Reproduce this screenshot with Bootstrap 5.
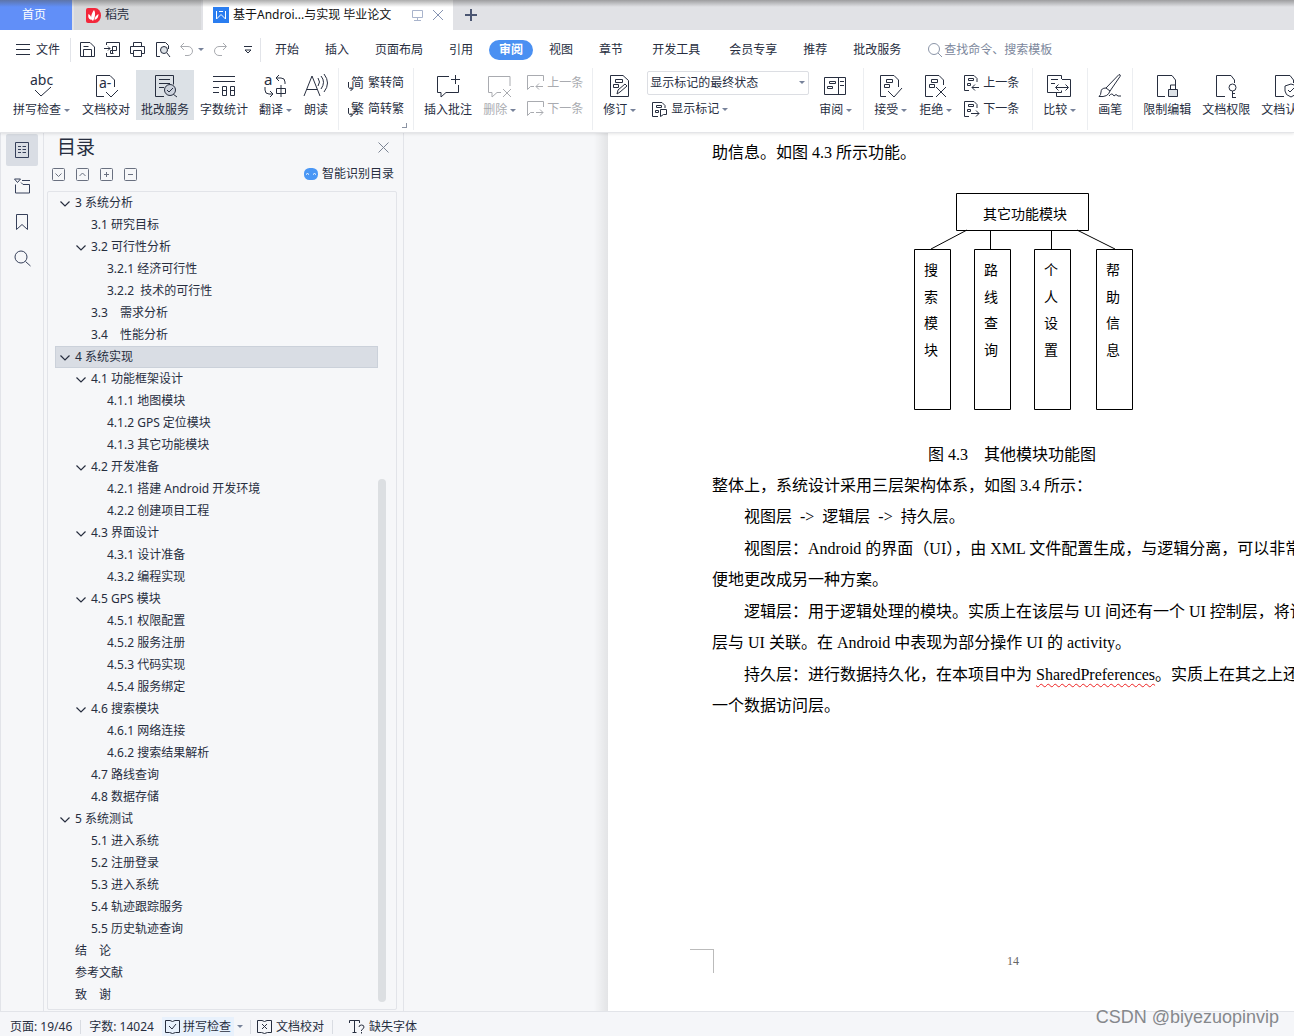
<!DOCTYPE html>
<html lang="zh-CN">
<head>
<meta charset="utf-8">
<meta name="viewport" content="width=device-width, initial-scale=1">
<title>毕业论文</title>
<link href="https://cdn.jsdelivr.net/npm/bootstrap@5.3.0/dist/css/bootstrap.min.css" rel="stylesheet">
<style>
:root{--ink:#272e3f;--line:#e2e4e9;--panel:#f6f7f9;--mute:#a9abb0}
body{font:12px/18px "Noto Sans","Noto Sans CJK SC",sans-serif;color:var(--ink);background:var(--panel)}
button{background:none;border:0;padding:0;color:inherit;white-space:nowrap}
a{color:inherit;text-decoration:none}
svg{display:block;flex:none;fill:none;stroke-width:1;overflow:visible}
svg:not([stroke]){stroke:currentColor}
svg text{fill:currentColor;stroke:none}
.tabbar{height:30px;background:#e1e2e6;position:relative}
.tabbar::after{content:"";position:absolute;left:0;right:0;top:0;height:7px;background:linear-gradient(rgba(90,90,90,.5),rgba(90,90,90,0));pointer-events:none}
.tab-home{width:72px;background:#618ff8;color:#fff;padding-right:4px}
.tab-side{width:127px;background:#d7d8da;margin:0 2px;padding-left:12px}
.tab-doc{width:250px;background:#fff;color:#111;padding-left:10px;gap:4px}
.tab-plus{stroke-width:2}
.menubar{height:38px;padding-top:1px;background:#fff}
.menubar .rule{width:1px;height:24px;background:var(--line)}
.file-btn{gap:6px;margin-right:10px}
.menu-item{padding:0 10px;margin:0 3px;height:20px;line-height:20px}
.menu-item.on{background:#4a90f2;color:#fff;font-weight:700;border-radius:10px}
.menu-item.far{margin-left:6px}
.find-box{margin-left:14px;gap:2px}
.find{color:#7c879c;border:0;outline:0;width:140px;background:none;padding:0}
.find::placeholder{color:#7c879c;opacity:1}
.ribbon{height:65px;background:#fff;border-bottom:1px solid #e4e5e8;overflow:hidden;padding-left:3px}
.ribbon-wrap{box-shadow:0 1px 3px rgba(0,0,0,.1);position:relative;z-index:2}
.grp{display:flex;flex:none;gap:1px;padding:2px 5px 0;border-right:1px solid #eceef1;height:62px;position:relative}
.big{display:flex;flex-direction:column;align-items:center;height:50px;padding:2px 5px 0}
.big svg{width:26px;height:26px;margin:0 -1px 3px}
.big.drop svg{margin-left:-3px}
.big.on{background:#dce1e6}
.caret{display:inline-block;border:3px solid transparent;border-top-color:#77829a;border-bottom:0;margin:0 1px 0 3px;vertical-align:middle}
.pair{display:flex;flex-direction:column;gap:8px;padding:4px 4px 0}
.pair button{display:flex;align-items:center;gap:3px;height:18px}
.pair svg{width:17px;height:18px}
.off{color:var(--mute)}
.view-select{width:162px;height:24px;margin-top:-4px;border:1px solid #dcdee3;border-radius:2px;background:#fff;color:var(--ink);padding:0 0 0 2px;appearance:none;outline:0}
.view-wrap{position:relative;height:18px}
.view-wrap .caret{position:absolute;right:3px;top:7px}
.corner{position:absolute;right:6px;bottom:2px;width:5px;height:5px;border:solid #8b93a3;border-width:0 1px 1px 0}
.rail{width:44px;border:solid var(--line);border-width:0 1px;padding:1px 5px 0;gap:4px;color:#36405a}
.rail button{width:32px;height:32px;border-radius:2px;display:flex;align-items:center;justify-content:center}
.rail button.on{background:#d9dde4}
.toc{width:360px;border-right:1px solid var(--line);padding:1px 6px 1px 3px}
.toc-head{padding:0 8px 0 10px}
.toc-title{font-size:19px;line-height:26px;font-weight:400;margin:0}
.toc-tools{gap:11px;margin:5px 3px 8px 5px;color:#697080}
.toc-smart{color:var(--ink)}
.toc-box{border:1px solid var(--line);border-radius:2px;overflow:hidden;min-height:0}
.toc-list{list-style:none;margin:0;padding:0 0 0 7px;font-size:12px}
.toc-list a{display:flex;align-items:center;height:22px;white-space:pre}
.toc-list a.on{background:#d9dde4;outline:1px solid #cbd1da;outline-offset:-1px}
.toc-list svg{width:10px;height:6px;margin:2px 5px 0;stroke-width:1.2}
.toc-list .leaf{padding-left:20px}
.l2{padding-left:16px}.l3{padding-left:32px}
.thumb{width:8px;height:64%;border-radius:4px;background:#dcdfe2;margin-bottom:7px}
.thumb-col{width:18px}
.gutter{width:204px;background:linear-gradient(90deg,rgba(0,0,0,0) 93%,rgba(0,0,0,.08))}
.paper{background:#fff;color:#000;padding:4px 0 38px 104px;font:400 16px/31px "Liberation Serif","Noto Sans CJK SC",serif;min-width:0;overflow:hidden}
.sheet{width:600px;white-space:nowrap;flex:none}
.sheet p{margin:0}
.sheet .ind{text-indent:32px}
.sheet .ind + .ind{margin-top:1px}
.chart{margin:25px 0 28px 202px}
.chart text{font-size:14px;fill:#000}
.misspell{text-decoration:underline wavy #e22;text-decoration-thickness:1px;text-underline-offset:3px;text-decoration-skip-ink:none}
.crop{width:24px;height:24px;border:solid #bbb;border-width:1px 1px 0 0;margin-left:-22px}
.folio{font-size:12px;line-height:24px;color:#666}
.statusbar{height:25px;background:#f5f6f9;border-top:1px solid var(--line);padding:5px 0 0 10px;position:relative}
.statusbar .cell{display:flex;align-items:center;height:20px}
.statusbar .rule{width:1px;height:14px;background:#d9dce2}
.statusbar .rule.slim{margin:0 6px}
.spell{background:#e8f1fc;padding:0 3px;gap:3px}
.mark-by{position:absolute;right:15px;bottom:7px;font:18px/24px "Liberation Sans",sans-serif;color:#86888c;z-index:3}
</style>
<script src="https://cdn.jsdelivr.net/npm/bootstrap@5.3.0/dist/js/bootstrap.bundle.min.js"></script>
</head>
<body class="d-flex flex-column vh-100 overflow-hidden">
<header class="flex-shrink-0 ribbon-wrap">
<div class="tabbar d-flex">
  <button class="tab-home">首页</button>
  <button class="tab-side d-flex align-items-center gap-1"><svg width="15" height="15" viewBox="0 0 15 15" stroke="none"><path d="M2 0h7a6 7.500 0 0 1 0 15H2a2 2 0 0 1-2-2V2a2 2 0 0 1 2-2z" fill="#f3273b"/><path d="M7 13C4 11 5 6 8 2c2 3 1 8-1 11zM5.500 12C2 11 2 8 2.500 6c2 1 3 3 3 6zM8.500 12c0-3 2-5 4-6 0 3-1 5-4 6z" fill="#fff"/></svg>稻壳</button>
  <div class="tab-doc d-flex align-items-center"><svg width="16" height="16" viewBox="0 0 16 16"><path fill="#2a7df0" stroke="none" d="M0 0h16v16H0z"/><path stroke="#fff" d="M3.500 4v8l4.500-4.500 4.500 4.500V4M6 4.500h4"/></svg>基于Androi...与实现 毕业论文
    <svg class="ms-3 me-1" width="13" height="12" viewBox="0 0 13 12" stroke="#a9b4cc"><path d="M1.500 1.500h10v7h-10zM6.500 9v2M3 11.500h7"/></svg><button aria-label="关闭"><svg width="12" height="12" viewBox="0 0 12 12" stroke="#8593b2"><path d="M1 1l10 10M11 1L1 11"/></svg></button></div>
  <button class="ms-1 px-2" aria-label="新建"><svg class="tab-plus" width="12" height="12" viewBox="0 0 12 12" stroke="#4b5672"><path d="M6 0v12M0 6h12"/></svg></button>
</div>
<nav class="menubar d-flex align-items-center text-nowrap">
  <button class="file-btn d-flex align-items-center ms-3"><svg width="14" height="11" viewBox="0 0 14 11"><path d="M0 .5h14M0 5.500h14M0 10.500h14"/></svg>文件</button>
  <span class="rule me-2"></span>
  <button aria-label="保存" class="me-2"><svg width="17" height="17" viewBox="0 0 17 17"><path d="M1.500 1.500h9.500l4.500 4.500v9.500h-14zM4.500 15V8.500h8V15M4.500 5.500h5"/></svg></button>
  <button aria-label="输出PDF" class="me-2"><svg width="17" height="17" viewBox="0 0 17 17"><path d="M2.500 4V1.500h13v14h-13V12M0 7.500h6M4 5.500l2 2-2 2M8.500 12V5.500h4v4h-6v3h3"/></svg></button>
  <button aria-label="打印" class="me-2"><svg width="17" height="17" viewBox="0 0 17 17"><path d="M4.500 5V1.500h8V5M4 12.500H1.500v-7h14v7H13M4.500 9.500h8v6h-8z"/></svg></button>
  <button aria-label="预览" class="me-2"><svg width="17" height="17" viewBox="0 0 17 17"><path d="M6 15.500H2.500v-14h9l3 3V8M13 12l3 4"/><circle cx="10" cy="9" r="3.500" fill="#dce1e6"/></svg></button>
  <button aria-label="撤销" class="off d-flex align-items-center"><svg width="15" height="15" viewBox="0 0 15 15"><path d="M5 1L1.500 4.500 5 8M2 4.500h7a4.500 4.500 0 0 1 0 9H6"/></svg><span class="caret ms-1"></span></button>
  <button aria-label="恢复" class="off ms-2 me-3"><svg width="15" height="15" viewBox="0 0 15 15"><path d="M10 1l3.500 3.500L10 8M13 4.500H6a4.500 4.500 0 0 0 0 9h3"/></svg></button>
  <button aria-label="更多"><svg width="8" height="8" viewBox="0 0 8 8"><path d="M0 .5h8M1 4l3 3 3-3z"/></svg></button>
  <span class="rule ms-2"></span>
  <button class="menu-item ms-1">开始</button><button class="menu-item">插入</button><button class="menu-item">页面布局</button><button class="menu-item">引用</button><button class="menu-item on">审阅</button><button class="menu-item">视图</button><button class="menu-item">章节</button><button class="menu-item far">开发工具</button><button class="menu-item far">会员专享</button><button class="menu-item">推荐</button><button class="menu-item">批改服务</button>
  <label class="find-box d-flex align-items-center"><svg width="14" height="14" viewBox="0 0 14 14" stroke="#8b95a8"><circle cx="6" cy="6" r="5.500"/><path d="M10 10l4 4"/></svg><input class="find" placeholder="查找命令、搜索模板" aria-label="查找命令"></label>
</nav>
<div class="ribbon d-flex">
  <div class="grp">
    <button class="big drop"><svg viewBox="0 0 26 26"><text x="2" y="13" font-size="14">abc</text><path d="M7 18l6 6 10-9"/></svg><span>拼写检查<i class="caret"></i></span></button>
    <button class="big"><svg viewBox="0 0 26 26"><path d="M11 24.500H3.500v-21H17l4.500 4.500v7M13 20l5 5 7-7"/><text x="6" y="16" font-size="14">a-</text></svg><span>文档校对</span></button>
    <button class="big on"><svg viewBox="0 0 26 26"><path d="M12 24.500H3.500v-21h18v9M7 7.500h11M7 11.500h11M7 15.500h5M21 22l4 3"/><circle cx="18" cy="18" r="5.500" fill="#ccd2dc"/><path d="M15 18l2 2 4-4"/></svg><span>批改服务</span></button>
    <button class="big"><svg viewBox="0 0 26 26"><path d="M2 4.500h22M2 9.500h22M2 15.500h6M2 20.500h6M11.500 14.500h4v9h-4zM19.500 14.500h4v9h-4zM11.500 18.500h4M19.500 18.500h4"/></svg><span>字数统计</span></button>
    <button class="big drop"><svg viewBox="0 0 26 26"><text x="2" y="13" font-size="15">a</text><path d="M17 3l-3 3 3 3M14 6h5q4 0 4 4v2M3 15v3q0 4 4 4h4M8 19l3 3-3 3M14.500 16.500h9v5h-9zM19 13v12"/></svg><span>翻译<i class="caret"></i></span></button>
    <button class="big"><svg viewBox="0 0 26 26"><path d="M1 24L9 4l8 20M4 17.500h10M15 6q3 4 0 8M18 4q5 6 0 13M21 2q7 9 0 18"/></svg><span>朗读</span></button>
  </div>
  <div class="grp">
    <div class="pair"><button><svg viewBox="0 0 17 18"><text x="3" y="13" font-size="13">简</text><path d="M.5 8v5q0 2 4 2M2.500 13l2 2-2 2"/></svg>繁转简</button><button><svg viewBox="0 0 17 18"><text x="3" y="13" font-size="13">繁</text><path d="M.5 8v5q0 2 4 2M2.500 13l2 2-2 2"/></svg>简转繁</button></div>
    <span class="corner"></span>
  </div>
  <div class="grp">
    <button class="big"><svg viewBox="0 0 26 26"><path d="M14 4.500H2.500v16H6V25l5-4.500h12.500V13M20.500 3v9M16 7.500h9"/></svg><span>插入批注</span></button>
    <button class="big drop off"><svg viewBox="0 0 26 26"><path d="M24 14V4.500H2.500v16H6V25l5-4.500h4M17 17l8 8M25 17l-8 8"/></svg><span>删除<i class="caret"></i></span></button>
    <div class="pair off"><button><svg viewBox="0 0 17 18"><path d="M16.500 7V1.500H.5v14l3-3H7M16 12.500H9M12 9.500l-3 3 3 3"/></svg>上一条</button><button><svg viewBox="0 0 17 18"><path d="M16.500 7V1.500H.5v14l3-3H7M9 12.500h7M13 9.500l3 3-3 3"/></svg>下一条</button></div>
  </div>
  <div class="grp">
    <button class="big drop"><svg viewBox="0 0 26 26"><path d="M4.500 3.500H17l5.500 5v16h-18zM9.500 7.500h7v3h-7zM7.500 12.500h5v3h-5zM11 22l1-4 7-6 2 2-7 6z"/></svg><span>修订<i class="caret"></i></span></button>
    <div class="pair"><div class="view-wrap"><select class="view-select" aria-label="显示方式"><option>显示标记的最终状态</option></select><i class="caret"></i></div><button class="ms-1"><svg viewBox="0 0 17 18"><path d="M7 16.500H1.500v-14H11l3 3V8M5.500 5.500h5v2h-5zM4.500 10.500h3v2h-3zM9.500 9.500h6v5h-3l-3 2z"/></svg><span>显示标记<i class="caret"></i></span></button></div>
    <button class="big drop"><svg viewBox="0 0 26 26"><path d="M2.500 5.500h21v17h-21zM16.500 5.500v17M18 9.500h4M18 13.500h4M7.500 9.500h6v2h-6zM5.500 14.500h5v2h-5z"/></svg><span>审阅<i class="caret"></i></span></button>
  </div>
  <div class="grp">
    <button class="big drop"><svg viewBox="0 0 26 26"><path d="M9 24.500H3.500v-21H17l4.500 4.500v7M9.500 7.500h6v3h-6zM7.500 12.500h5v3h-5zM11 19l6 6 8-9"/></svg><span>接受<i class="caret"></i></span></button>
    <button class="big drop"><svg viewBox="0 0 26 26"><path d="M11 24.500H3.500v-21H17l4.500 4.500v5M9.500 7.500h6v3h-6zM7.500 12.500h5v3h-5zM14 15l10 10M24 15L14 25"/></svg><span>拒绝<i class="caret"></i></span></button>
    <div class="pair pe-2"><button><svg viewBox="0 0 17 18"><path d="M6 16.500H1.500v-15H11l3 3V8M5.500 4.500h5v2h-5zM4.500 9.500h3v2h-3zM16 13.500H9M12 10.500l-3 3 3 3"/></svg>上一条</button><button><svg viewBox="0 0 17 18"><path d="M6 16.500H1.500v-15H11l3 3V8M5.500 4.500h5v2h-5zM4.500 9.500h3v2h-3zM8 13.500h8M13 10.500l3 3-3 3"/></svg>下一条</button></div>
  </div>
  <div class="grp"><button class="big drop"><svg viewBox="0 0 26 26"><path d="M15.500 7V3.500h-14v17h14v-2M5 7.500h7M5 11.500h4M16 7.500h8.500v17h-14V21M10 15.500h12M12.500 12.500l-3 3 3 3M19.500 12.500l3 3-3 3"/></svg><span>比较<i class="caret"></i></span></button></div>
  <div class="grp"><button class="big"><svg viewBox="0 0 26 26"><path d="M9 16L22 2.500q2 0 1 2L13 19zM9 16q-5 0-5 4 0 3-2 4.500 9 1 11-5.500M12 24q3-4 5 0 2-3 4 0h3"/></svg><span>画笔</span></button></div>
  <div class="grp">
    <button class="big"><svg viewBox="0 0 26 26"><path d="M11 24.500H3.500v-21H18l3.500 4.500v5"/><path d="M14.500 17.500h9v7h-9z" fill="#dce1e6"/><path d="M16.500 17v-4h5v4"/></svg><span>限制编辑</span></button>
    <button class="big"><svg viewBox="0 0 26 26"><path d="M12 24.500H3.500v-21H18l3.500 4.500v3M19.500 19v6.500M19 21.500h3M19 25.500h4"/><circle cx="19.500" cy="15.500" r="3.500"/></svg><span>文档权限</span></button>
    <button class="big"><svg viewBox="0 0 26 26"><path d="M12 24.500H3.500v-21H18l3.500 4.500v3M19 12l6 2v5q0 4-6 6-6-2-6-6v-5zM16 18l2 2 4-4"/></svg><span>文档认证</span></button>
  </div>
</div>
</header>
<main class="d-flex flex-grow-1 overflow-hidden">
  <div class="rail d-flex flex-column flex-shrink-0">
    <button class="on" aria-label="目录"><svg width="16" height="18" viewBox="0 0 16 18"><path d="M1.500 1.500h13v15h-13zM4 5.500h3M8.500 5.500H12M4 8.500h3M8.500 8.500H12M4 11.500h3M8.500 11.500H12"/></svg></button>
    <button aria-label="章节"><svg width="17" height="16" viewBox="0 0 17 16"><path d="M1.500 6.500v8.500h14V6.500H9l-2-2M8 2.500h8M.5 1h6L3.500 4.500z"/></svg></button>
    <button aria-label="书签"><svg width="12" height="18" viewBox="0 0 12 18"><path d="M.5 1.500h11v15L6 11.500l-5.500 5z"/></svg></button>
    <button aria-label="查找"><svg width="17" height="17" viewBox="0 0 17 17"><circle cx="7" cy="7" r="6"/><path d="M11.500 11.500l5 4.500"/></svg></button>
  </div>
  <aside class="toc d-flex flex-column flex-shrink-0">
    <div class="toc-head d-flex justify-content-between align-items-center"><h2 class="toc-title">目录</h2><button aria-label="关闭目录"><svg width="11" height="11" viewBox="0 0 11 11" stroke="#7b8494"><path d="M.5 .5l10 10M10.500 .5l-10 10"/></svg></button></div>
    <div class="toc-tools d-flex align-items-center">
      <button aria-label="展开"><svg width="13" height="13" viewBox="0 0 13 13"><rect x=".5" y=".5" width="12" height="12" rx="1"/><path d="M3.500 5.500l3 3 3-3"/></svg></button>
      <button aria-label="收起"><svg width="13" height="13" viewBox="0 0 13 13"><rect x=".5" y=".5" width="12" height="12" rx="1"/><path d="M3.500 8l3-3 3 3"/></svg></button>
      <button aria-label="增加"><svg width="13" height="13" viewBox="0 0 13 13"><rect x=".5" y=".5" width="12" height="12" rx="1"/><path d="M4 6.500h5M6.500 4v5"/></svg></button>
      <button aria-label="减少"><svg width="13" height="13" viewBox="0 0 13 13"><rect x=".5" y=".5" width="12" height="12" rx="1"/><path d="M4 6.500h5"/></svg></button>
      <a href="#" class="toc-smart ms-auto d-flex align-items-center gap-1"><svg width="14" height="12" viewBox="0 0 14 12"><rect width="14" height="12" rx="5.500" fill="#4a97f5" stroke="none"/><path stroke="#fff" d="M2 6.500q1.500-2 3 0M9 6.500q1.500-2 3 0"/></svg>智能识别目录</a>
    </div>
    <div class="toc-box d-flex flex-grow-1">
      <ul class="toc-list flex-grow-1" id="toc"></ul>
      <div class="thumb-col d-flex align-items-end"><span class="thumb"></span></div>
    </div>
  </aside>
  <div class="gutter flex-shrink-0"></div>
  <article class="paper flex-grow-1 d-flex flex-column">
    <div class="sheet">
      <p>助信息。如图 4.3 所示功能。</p>
      <svg class="chart" width="220" height="218" viewBox="0 0 220 218">
        <path d="M42.500 .5h132v37h-132zM.5 56.500h36v160H.5zM60.500 56.500h36v160h-36zM120.500 56.500h36v160h-36zM182.500 56.500h36v160h-36zM76.500 38v18M137.500 38v18"/>
        <path d="M53 37L17 56M163 37l38 19"/>
        <text x="69" y="26">其它功能模块</text>
        <text><tspan x="10" y="82">搜</tspan><tspan x="10" y="109">索</tspan><tspan x="10" y="135">模</tspan><tspan x="10" y="162">块</tspan></text>
        <text><tspan x="70" y="82">路</tspan><tspan x="70" y="109">线</tspan><tspan x="70" y="135">查</tspan><tspan x="70" y="162">询</tspan></text>
        <text><tspan x="130" y="82">个</tspan><tspan x="130" y="109">人</tspan><tspan x="130" y="135">设</tspan><tspan x="130" y="162">置</tspan></text>
        <text><tspan x="192" y="82">帮</tspan><tspan x="192" y="109">助</tspan><tspan x="192" y="135">信</tspan><tspan x="192" y="162">息</tspan></text>
      </svg>
      <p class="text-center">图 4.3　其他模块功能图</p>
      <p>整体上，系统设计采用三层架构体系，如图 3.4 所示：</p>
      <p class="ind">视图层&nbsp; -&gt;&nbsp; 逻辑层&nbsp; -&gt;&nbsp; 持久层。</p>
      <p class="ind">视图层：Android 的界面（UI），由 XML 文件配置生成，与逻辑分离，可以非常方<br>便地更改成另一种方案。</p>
      <p class="ind">逻辑层：用于逻辑处理的模块。实质上在该层与 UI 间还有一个 UI 控制层，将该<br>层与 UI 关联。在 Android 中表现为部分操作 UI 的 activity。</p>
      <p class="ind">持久层：进行数据持久化，在本项目中为 <span class="misspell">SharedPreferences</span>。实质上在其之上还有<br>一个数据访问层。</p>
    </div>
    <div class="sheet mt-auto d-flex"><span class="crop"></span><span class="folio flex-grow-1 text-center">14</span></div>
  </article>
</main>
<footer class="statusbar d-flex align-items-center flex-shrink-0 text-nowrap">
  <span class="cell">页面: 19/46</span><span class="rule mx-2"></span>
  <span class="cell">字数: 14024</span>
  <button class="cell spell ms-2"><svg width="15" height="15" viewBox="0 0 15 15"><path d="M5 1.500H.5v12h4l3 1 3-1h4v-12H10l-2.500 1zM4 7l3 3 4-5"/></svg>拼写检查</button><i class="caret"></i><span class="rule slim"></span>
  <button class="cell gap-1"><svg width="15" height="15" viewBox="0 0 15 15"><path d="M5 1.500H.5v12h4l3 1 3-1h4v-12H10l-2.500 1zM5 5l5 5M10 5l-5 5"/></svg>文档校对</button><span class="rule mx-2"></span>
  <button class="cell gap-1 ms-2"><svg width="16" height="15" viewBox="0 0 16 15"><path d="M.5 4V1.500h10V4M5.500 1.500v12M3.500 13.500h4M10 8q0-2 2.500-2T15 8q0 1.500-2.500 3v1M12.500 13v1.500"/></svg>缺失字体</button>
  <span class="mark-by">CSDN @biyezuopinvip</span>
</footer>
<script>
// level, open marker, caption
const items = [
 [1,1,'3 系统分析'],[2,0,'3.1 研究目标'],[2,1,'3.2 可行性分析'],[3,0,'3.2.1 经济可行性'],[3,0,'3.2.2  技术的可行性'],
 [2,0,'3.3　需求分析'],[2,0,'3.4　性能分析'],[1,1,'4 系统实现'],[2,1,'4.1 功能框架设计'],[3,0,'4.1.1 地图模块'],
 [3,0,'4.1.2 GPS 定位模块'],[3,0,'4.1.3 其它功能模块'],[2,1,'4.2 开发准备'],[3,0,'4.2.1 搭建 Android 开发环境'],
 [3,0,'4.2.2 创建项目工程'],[2,1,'4.3 界面设计'],[3,0,'4.3.1 设计准备'],[3,0,'4.3.2 编程实现'],[2,1,'4.5 GPS 模块'],
 [3,0,'4.5.1 权限配置'],[3,0,'4.5.2 服务注册'],[3,0,'4.5.3 代码实现'],[3,0,'4.5.4 服务绑定'],[2,1,'4.6 搜索模块'],
 [3,0,'4.6.1 网络连接'],[3,0,'4.6.2 搜索结果解析'],[2,0,'4.7 路线查询'],[2,0,'4.8 数据存储'],[1,1,'5 系统测试'],
 [2,0,'5.1 进入系统'],[2,0,'5.2 注册登录'],[2,0,'5.3 进入系统'],[2,0,'5.4 轨迹跟踪服务'],[2,0,'5.5 历史轨迹查询'],
 [1,0,'结　论'],[1,0,'参考文献'],[1,0,'致　谢']];
const arrow = '<svg viewBox="0 0 10 6"><path d="M.5 .5L5 5 9.500 .5"/></svg>';
document.getElementById('toc').innerHTML = items.map(([l, open, t]) =>
 `<li class="l${l}"><a href="#"${t === '4 系统实现' ? ' class="on"' : ''}>${open ? arrow + t : '<span class="leaf">' + t + '</span>'}</a></li>`).join('');
</script>
</body>
</html>
